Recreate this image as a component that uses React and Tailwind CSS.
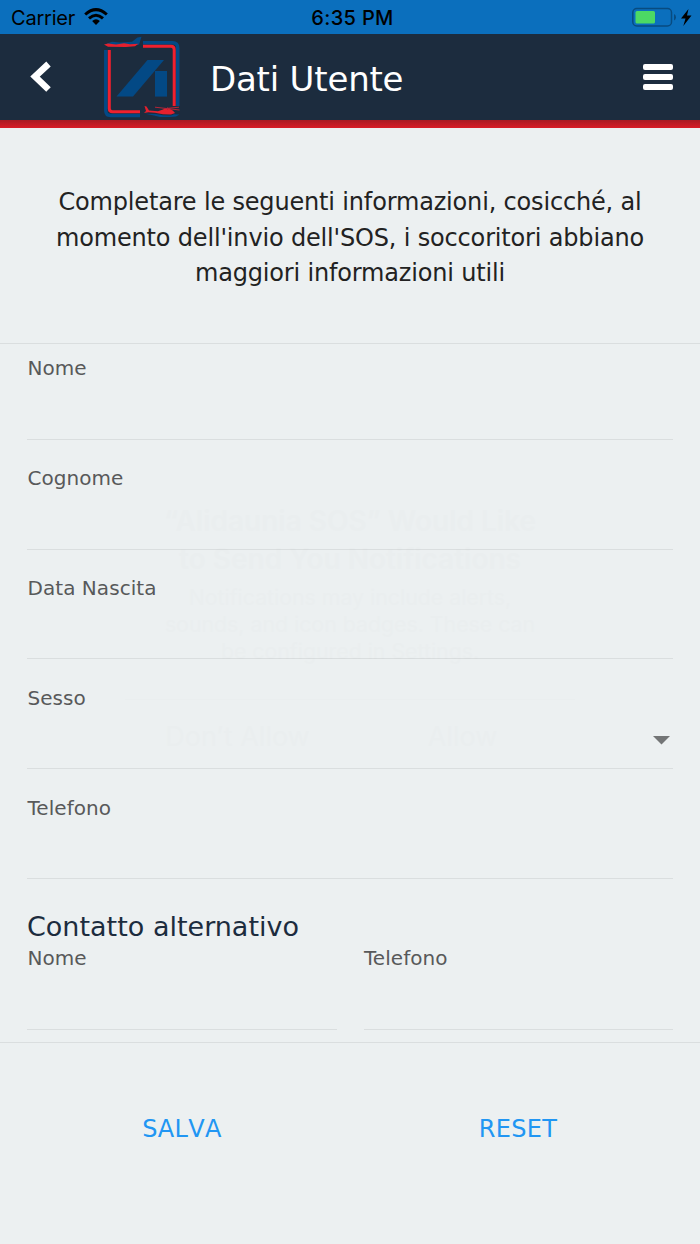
import React from 'react'

const Logo = () => (
  <svg className="mt-0.5 w-20 h-[84px]" viewBox="102 36 80 84" fill="none">
    <path d="M105.800 50V110.500Q105.800 115.500 110.800 115.500H140M143 42.700H172.500Q177.700 42.700 177.700 47.900V106" stroke="#034985" strokeWidth="3.500" />
    <path d="M109.300 50V108.500Q109.300 111.800 112.600 111.800H140M143 46.200H171Q174.200 46.200 174.200 49.500V106" stroke="#f0202e" strokeWidth="3" />
    <path d="M147.500 60H164L133 96.600H116.500Z" fill="#034985" />
    <path d="M155 71H167V96.600H155Z" fill="#034985" />
    <path d="M107 43.500L112 41.800L120 42.600L132 41.800L137.500 37.500L141.500 36.700L139 44.800L128 46L108 45Z" fill="#034985" />
    <path d="M104 44.500L108 43.600L116 44.600L124 43.200L130 44.200L138.500 43.800L135 46.200L126 47L108 46.700Z" fill="#e5202e" />
    <path d="M144.500 106L146.500 106.500L149 110.500L158 111.300L163 109.500L165 108.200H169L173 110.800L175 113L171 114.600L163 114.300L155 112.800L148.500 112.300L144 113L146 111Z" fill="#e5202e" />
    <path d="M155 107.200L179.500 110M167 108.400L179 107.200M167.500 107.500V110" stroke="#b52538" strokeWidth="1" />
    <path d="M145 113.800L156 114L163 115.300L171 115.500L174 114.200L179.500 114.500L176 116.500L170 117H160L154 115.500Z" fill="#034985" />
  </svg>
)

const StatusBar = () => (
  <div className="h-[34px] bg-[#0b6fbd] flex items-center justify-between pl-[11px] pr-2 text-black font-['Inter',sans-serif] text-[20px]">
    <div className="flex-1 flex items-center gap-[9px]">
      <span className="pt-0.5 tracking-[-0.2px]">Carrier</span>
      <svg className="w-6 h-[18px]" viewBox="0 0 24 18" fill="none" stroke="#000" strokeWidth="3">
        <path d="M1.200 6.500Q12-3.300 22.800 6.500" />
        <path d="M5 10.400Q12 4.200 19 10.400" />
        <path d="M8.100 13Q12 9.600 15.900 13L12 17Z" fill="#000" stroke="none" />
      </svg>
    </div>
    <span className="pt-0.5 pl-0.5 font-medium text-[20px] tracking-[0.35px]">6:35 PM</span>
    <div className="flex-1 flex items-center justify-end">
      <svg className="w-[60px] h-6" viewBox="632 5 60 24">
        <rect x="632.800" y="8.500" width="38.700" height="17.500" rx="4" fill="none" stroke="#084b80" strokeWidth="1.500" />
        <rect x="635.500" y="11" width="19.500" height="12.500" rx="1.500" fill="#4cd964" />
        <path d="M674 14Q676 15 676 17.200T674 20.500Z" fill="#084b80" />
        <path d="M688.500 9L681 18.500H685.500L683.300 26L691.500 15.500H687Z" fill="#000" />
      </svg>
    </div>
  </div>
)

const Header = () => (
  <header className="h-[94px] bg-[#1c2c3e] flex flex-col">
    <div className="h-[86px] flex items-center pl-[30px] pr-[27px]">
      <svg className="w-[22px] h-8" viewBox="0 0 22 32" fill="none" stroke="#fff" strokeWidth="6.500">
        <path d="M18.500 3L5 15.500L18.500 28.500" />
      </svg>
      <div className="ml-[50px]"><Logo /></div>
      <h1 className="ml-7 flex-1 text-white text-[34px] leading-none pt-1 tracking-[-0.2px]">Dati Utente</h1>
      <div className="flex flex-col gap-[4.500px] w-[30px]">
        <span className="h-[5.500px] rounded-[2px] bg-white" />
        <span className="h-[5.500px] rounded-[2px] bg-white" />
        <span className="h-[5.500px] rounded-[2px] bg-white" />
      </div>
    </div>
    <div className="h-2 bg-linear-to-b from-[#a81b23] to-[#d81c27]" />
  </header>
)

const Field = ({ label, select }) => (
  <div className="h-[109.8px] pb-[13px]">
    <div className="h-[95.800px] border-b border-[#dadedf] flex flex-col">
      <label className="pt-[13.400px] pl-[0.500px] text-[20px] leading-[22px] tracking-[0.05px] text-[#58595a]">{label}</label>
      {select && (
        <svg className="self-end mr-[3.500px] mt-[27px] w-[17px] h-[9px]" viewBox="0 0 17 9">
          <path d="M0 0H17L8.500 8.500Z" fill="#737576" />
        </svg>
      )}
    </div>
  </div>
)

// system permission prompt at the end of its fade out
const FadingPrompt = () => (
  <div className="absolute left-[125px] top-[502px] w-[450px] text-center text-black opacity-[0.005] pointer-events-none font-['Inter',sans-serif]">
    <p className="text-[28px] leading-[38px] font-semibold">“Alidaunia SOS” Would Like<br />to Send You Notifications</p>
    <p className="text-[21.300px] leading-[27px] mt-1.5">Notifications may include alerts,<br />sounds, and icon badges. These can<br />be configured in Settings.</p>
    <div className="mt-[34px] flex border-t border-black text-[27px] leading-[73px]">
      <span className="flex-1">Don’t Allow</span>
      <span className="flex-1">Allow</span>
    </div>
  </div>
)

const App = () => (
  <div className="relative w-[700px] h-[1244px] overflow-hidden bg-[#ecf0f1] font-['DejaVu_Sans',sans-serif]">
    <StatusBar />
    <Header />

    <p className="h-[215px] pt-[57px] text-center text-[24px] leading-[35.5px] tracking-[-0.17px] text-[#222]">
      Completare le seguenti informazioni, cosicché, al<br />
      momento dell'invio dell'SOS, i soccoritori abbiano<br />
      maggiori informazioni utili
    </p>

    <main className="h-[700px] border-y border-[#dadedf] px-[27px]">
      <Field label="Nome" />
      <Field label="Cognome" />
      <Field label="Data Nascita" />
      <Field label="Sesso" select />
      <Field label="Telefono" />
      <h2 className="pt-[18px] text-[27px] leading-[32px] text-[#1c2c3e]">Contatto alternativo</h2>
      <div className="grid grid-cols-2 gap-[27px]">
        <div className="h-[87px] border-b border-[#dadedf] text-[20px] leading-[22px] tracking-[0.05px] pt-1 pl-[0.500px] text-[#58595a]">Nome</div>
        <div className="h-[87px] border-b border-[#dadedf] text-[20px] leading-[22px] tracking-[0.05px] pt-1 pl-[0.500px] text-[#58595a]">Telefono</div>
      </div>
    </main>

    <div className="grid grid-cols-2 px-3.5 pt-[70px] text-center text-[24px] leading-[32px] tracking-[0.3px] [font-kerning:none] text-[#2196f3]">
      <button>SALVA</button>
      <button>RESET</button>
    </div>

    <FadingPrompt />
  </div>
)

export default App
